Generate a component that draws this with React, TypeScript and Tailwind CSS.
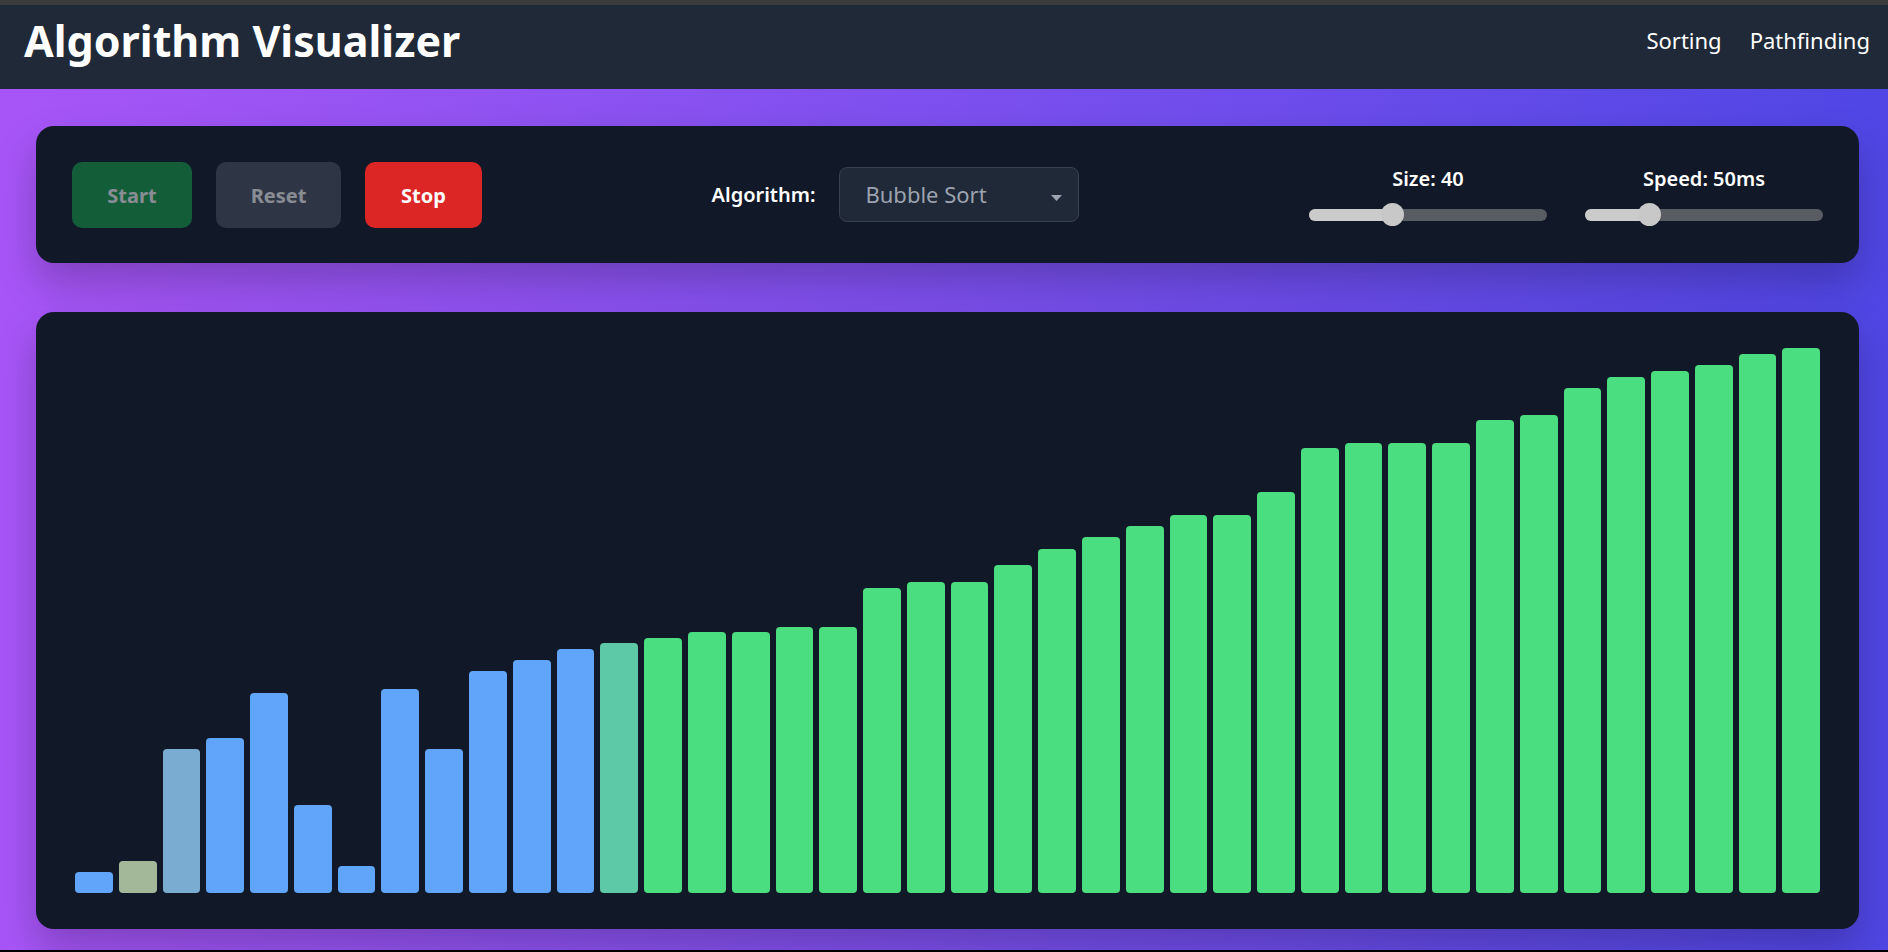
import React from "react"

const bars: { h: number; c: string }[] = [
  { h: 21, c: "bg-[#60a5fa]" },
  { h: 32, c: "bg-[#a3b899]" },
  { h: 144, c: "bg-[#7aabd0]" },
  { h: 155, c: "bg-[#60a5fa]" },
  { h: 200, c: "bg-[#60a5fa]" },
  { h: 88, c: "bg-[#60a5fa]" },
  { h: 27, c: "bg-[#60a5fa]" },
  { h: 204, c: "bg-[#60a5fa]" },
  { h: 144, c: "bg-[#60a5fa]" },
  { h: 222, c: "bg-[#60a5fa]" },
  { h: 233, c: "bg-[#60a5fa]" },
  { h: 244, c: "bg-[#60a5fa]" },
  { h: 250, c: "bg-[#5ec9a6]" },
  { h: 255, c: "bg-[#4ade80]" },
  { h: 261, c: "bg-[#4ade80]" },
  { h: 261, c: "bg-[#4ade80]" },
  { h: 266, c: "bg-[#4ade80]" },
  { h: 266, c: "bg-[#4ade80]" },
  { h: 305, c: "bg-[#4ade80]" },
  { h: 311, c: "bg-[#4ade80]" },
  { h: 311, c: "bg-[#4ade80]" },
  { h: 328, c: "bg-[#4ade80]" },
  { h: 344, c: "bg-[#4ade80]" },
  { h: 356, c: "bg-[#4ade80]" },
  { h: 367, c: "bg-[#4ade80]" },
  { h: 378, c: "bg-[#4ade80]" },
  { h: 378, c: "bg-[#4ade80]" },
  { h: 401, c: "bg-[#4ade80]" },
  { h: 445, c: "bg-[#4ade80]" },
  { h: 450, c: "bg-[#4ade80]" },
  { h: 450, c: "bg-[#4ade80]" },
  { h: 450, c: "bg-[#4ade80]" },
  { h: 473, c: "bg-[#4ade80]" },
  { h: 478, c: "bg-[#4ade80]" },
  { h: 505, c: "bg-[#4ade80]" },
  { h: 516, c: "bg-[#4ade80]" },
  { h: 522, c: "bg-[#4ade80]" },
  { h: 528, c: "bg-[#4ade80]" },
  { h: 539, c: "bg-[#4ade80]" },
  { h: 545, c: "bg-[#4ade80]" },
]

function Slider({ label, pos }: { label: string; pos: number }) {
  return (
    <div className="flex w-[238px] flex-col items-center">
      <span className="text-[20px] leading-[28px] font-semibold text-white">{label}</span>
      <div className="relative mt-[10px] h-[24px] w-full">
        <div className="absolute top-[6px] left-0 h-[12px] w-full rounded-full bg-[#595c63]" />
        <div className="absolute top-[6px] left-0 h-[12px] rounded-full bg-[#cbcbcb]" style={{ width: pos + 4 }} />
        <div
          className="absolute top-[0.5px] h-[23px] w-[23px] rounded-full bg-[#c8c8c8]"
          style={{ left: pos - 11.5 }}
        />
      </div>
    </div>
  )
}

export default function App() {
  return (
    <div className="flex h-[952px] w-full flex-col overflow-hidden bg-gradient-to-r from-[#a855f7] to-[#4f46e5] font-['Noto_Sans',sans-serif]">
      <div className="h-[5px] shrink-0 bg-[#3c3c3c]" />
      <header className="flex h-[84px] shrink-0 items-center justify-between bg-[#1f2937] pr-[18px] pb-[14px] pl-[24px]">
        <h1 className="text-[43px] leading-none font-bold text-white">Algorithm Visualizer</h1>
        <nav className="flex gap-[28px] text-[22px] text-white">
          <a href="#sorting">Sorting</a>
          <a href="#pathfinding">Pathfinding</a>
        </nav>
      </header>

      <main className="flex flex-1 flex-col pt-[37px] pr-[29px] pl-[36px]">
        <div className="flex h-[137px] items-center justify-between rounded-[18px] bg-[#111827] px-[36px] shadow-[0_20px_40px_rgba(0,0,0,0.22)]">
          <div className="flex gap-[24px]">
            <button className="h-[66px] w-[120px] rounded-[10px] bg-[#16a34a] pt-[2px] text-[20px] font-bold text-white opacity-50">
              Start
            </button>
            <button className="h-[66px] w-[125px] rounded-[10px] bg-[#4b5563] pt-[2px] text-[20px] font-bold text-white opacity-50">
              Reset
            </button>
            <button className="h-[66px] w-[117px] rounded-[10px] bg-[#dc2626] pt-[2px] text-[20px] font-bold text-white">
              Stop
            </button>
          </div>

          <div className="flex items-center gap-[24px]">
            <span className="text-[20px] font-semibold text-white">Algorithm:</span>
            <div className="flex h-[55px] w-[240px] items-center justify-between rounded-[8px] border border-[#374151] bg-[#1f2937] pr-[16px] pl-[25px]">
              <span className="text-[22px] text-[#9ca3af]">Bubble Sort</span>
              <svg width="11" height="6" viewBox="0 0 11 6" className="mt-[6px]">
                <path d="M0 0 L11 0 L5.5 6 Z" fill="#9ca3af" />
              </svg>
            </div>
          </div>

          <div className="mt-[2px] flex gap-[38px]">
            <Slider label="Size: 40" pos={83} />
            <Slider label="Speed: 50ms" pos={64} />
          </div>
        </div>

        <div className="mt-[49px] flex h-[617px] items-end gap-[6px] rounded-[18px] bg-[#111827] pt-[36px] pr-[39px] pb-[36px] pl-[39px] shadow-[0_20px_40px_rgba(0,0,0,0.22)]">
          {bars.map((b, i) => (
            <div key={i} className={`flex-1 rounded-[4px] ${b.c}`} style={{ height: b.h }} />
          ))}
        </div>
      </main>
      <div className="h-[2px] shrink-0 bg-black" />
    </div>
  )
}
